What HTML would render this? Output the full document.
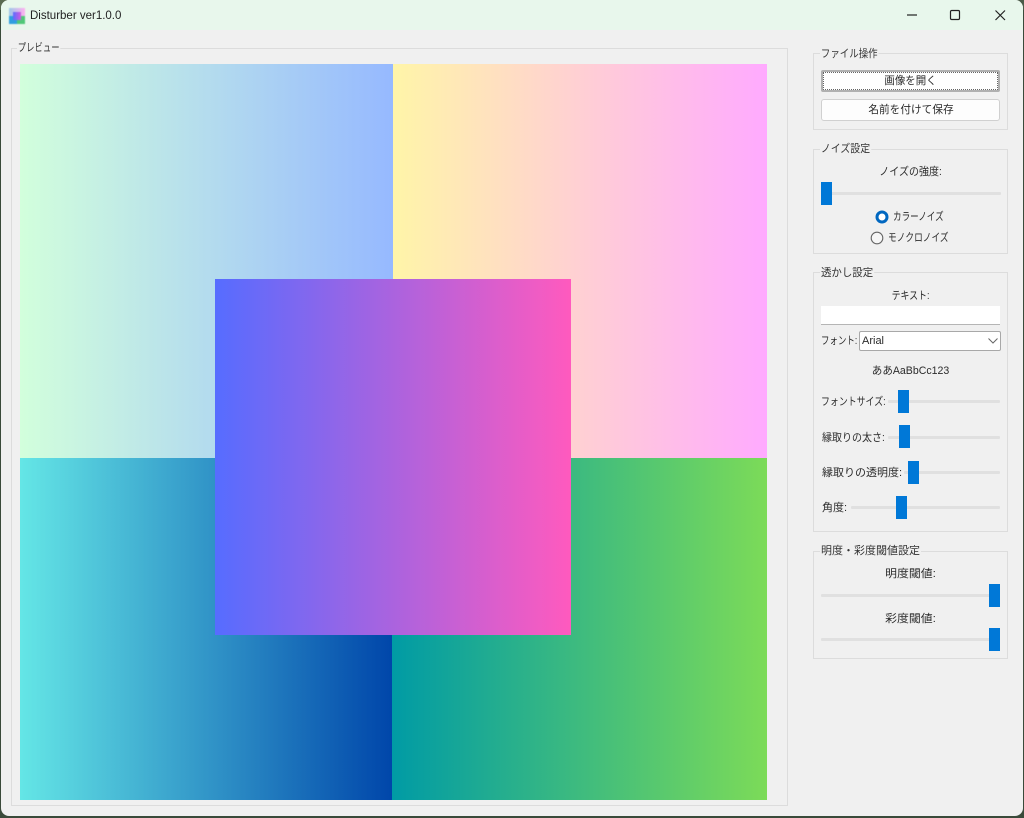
<!DOCTYPE html>
<html lang="ja">
<head>
<meta charset="utf-8">
<title>Disturber ver1.0.0</title>
<style>
html,body{margin:0;padding:0;width:1024px;height:818px;overflow:hidden;background:#3a4a3a;}
*{box-sizing:border-box;}
body{font-family:"Liberation Sans","Noto Sans CJK JP",sans-serif;font-size:11px;color:#2b2b2b;position:relative;}
.a{position:absolute;}
#bgtop{left:0;top:0;width:1024px;height:10px;background:linear-gradient(90deg,#5a6a50,#8a9a70 30%,#55634c 60%,#4a5a48);}
#win{left:1px;top:0;width:1022px;height:816px;background:#f0f0f0;border-radius:8px;overflow:hidden;}
.t{position:absolute;white-space:nowrap;line-height:14px;transform-origin:left center;}
.c{text-align:center;transform-origin:center center;}
.g{position:absolute;border:1px solid #dcdcdc;}
.leg{position:absolute;background:#f0f0f0;padding:0 1px 0 1px;white-space:nowrap;line-height:14px;height:14px;color:#333;transform-origin:left center;}
.tr{position:absolute;height:3px;background:#e0e0e0;border-radius:1px;}
.th{position:absolute;width:11px;height:23px;background:#0078d7;}
.btn{position:absolute;background:#fdfdfd;border:1px solid #d0d0d0;border-radius:3px;text-align:center;}
.s{display:inline-block;}
</style>
</head>
<body>
<div id="bgtop" class="a"></div>
<div id="win" class="a"></div>
<div class="a" style="left:1px;top:0;width:1022px;height:30px;background:#e8f7ec;border-radius:8px 8px 0 0;"></div>

<!-- app icon -->
<div class="a" style="left:9px;top:8px;width:16px;height:16px;filter:blur(.5px);">
<div class="a" style="left:0;top:0;width:16px;height:8px;background:linear-gradient(90deg,#9fc8e8,#ffb0f0);"></div>
<div class="a" style="left:0;top:8px;width:8px;height:8px;background:#2f9fe0;"></div>
<div class="a" style="left:8px;top:8px;width:8px;height:8px;background:#50c878;"></div>
<div class="a" style="left:4px;top:4px;width:8px;height:8px;background:linear-gradient(90deg,#5a6eff,#d05ae0);"></div>
</div>

<div class="t" style="left:30px;top:9px;font-size:11.5px;color:#222;">Disturber ver1.0.0</div>

<!-- window controls -->
<svg class="a" style="left:900px;top:5px;" width="116" height="20" viewBox="0 0 116 20">
<path d="M7 10H17" stroke="#222" stroke-width="1.2" fill="none"/>
<rect x="50.5" y="5.5" width="9" height="9" rx="1.2" stroke="#222" stroke-width="1.2" fill="none"/>
<path d="M95.5 5.5L105 15M105 5.5L95.5 15" stroke="#222" stroke-width="1.2" fill="none"/>
</svg>

<!-- preview -->
<div class="g" style="left:11px;top:48px;width:777px;height:758px;"></div>
<div class="leg" style="left:17px;top:41px;transform:scaleX(.76);">プレビュー</div>
<div class="a" style="left:20px;top:64px;width:373px;height:394px;background:linear-gradient(90deg,#d2ffdc,#96b9ff);"></div>
<div class="a" style="left:393px;top:64px;width:374px;height:394px;background:linear-gradient(90deg,#fff5a8,#ffaaff);"></div>
<div class="a" style="left:20px;top:458px;width:372px;height:342px;background:linear-gradient(90deg,#64e6e6,#0046aa);"></div>
<div class="a" style="left:392px;top:458px;width:375px;height:342px;background:linear-gradient(90deg,#009ba5,#7cdb58);"></div>
<div class="a" style="left:215px;top:279px;width:356px;height:356px;background:linear-gradient(90deg,#566cff,#ff5abe);"></div>

<!-- file ops -->
<div class="g" style="left:813px;top:53px;width:195px;height:77px;"></div>
<div class="leg" style="left:820px;top:47px;transform:scaleX(.86);">ファイル操作</div>
<div class="btn" style="left:821px;top:70px;width:179px;height:22px;border:2px solid #b0b0b0;border-radius:2px;background:#fff;">
<span style="display:block;position:absolute;left:0;top:0;right:0;bottom:0;border:1px dotted #666;line-height:16px;"><span class="s" style="transform:scaleX(.95);">画像を開く</span></span></div>
<div class="btn" style="left:821px;top:99px;width:179px;height:22px;line-height:20px;"><span class="s" style="transform:scaleX(.97);">名前を付けて保存</span></div>

<!-- noise -->
<div class="g" style="left:813px;top:149px;width:195px;height:105px;"></div>
<div class="leg" style="left:820px;top:142px;transform:scaleX(.9);">ノイズ設定</div>
<div class="t c" style="left:813px;top:165px;width:195px;transform:scaleX(.91);">ノイズの強度:</div>
<div class="tr" style="left:821px;top:192px;width:180px;"></div>
<div class="th" style="left:821px;top:182px;"></div>
<svg class="a" style="left:874px;top:209px;" width="16" height="16" viewBox="0 0 16 16">
<circle cx="8" cy="8" r="6.5" fill="#fff"/><circle cx="8" cy="8" r="5" fill="none" stroke="#0067c0" stroke-width="3"/><circle cx="8" cy="8" r="2.4" fill="#fff"/>
</svg>
<div class="t" style="left:893px;top:210px;transform:scaleX(.78);">カラーノイズ</div>
<svg class="a" style="left:869px;top:230px;" width="16" height="16" viewBox="0 0 16 16">
<circle cx="8" cy="8" r="5.8" fill="#f6f6f6" stroke="#666" stroke-width="1.1"/>
</svg>
<div class="t" style="left:888px;top:231px;transform:scaleX(.79);">モノクロノイズ</div>

<!-- watermark -->
<div class="g" style="left:813px;top:272px;width:195px;height:260px;"></div>
<div class="leg" style="left:820px;top:266px;transform:scaleX(.95);">透かし設定</div>
<div class="t c" style="left:813px;top:289px;width:195px;transform:scaleX(.81);">テキスト:</div>
<div class="a" style="left:821px;top:306px;width:179px;height:19px;background:#fff;border-bottom:1px solid #b5b5b5;"></div>
<div class="t" style="left:821px;top:334px;transform:scaleX(.77);">フォント:</div>
<div class="a" style="left:859px;top:331px;width:142px;height:20px;background:#fff;border:1px solid #a8a8a8;border-radius:2px;"></div>
<div class="t" style="left:862px;top:334px;">Arial</div>
<svg class="a" style="left:987px;top:337px;" width="12" height="8" viewBox="0 0 12 8"><path d="M1.5 1.5L6 6L10.5 1.5" fill="none" stroke="#666" stroke-width="1"/></svg>
<div class="t c" style="left:813px;top:364px;width:195px;transform:scaleX(.96);">ああAaBbCc123</div>

<div class="t" style="left:821px;top:395px;transform:scaleX(.81);">フォントサイズ:</div>
<div class="tr" style="left:888px;top:400px;width:112px;"></div>
<div class="th" style="left:898px;top:390px;"></div>

<div class="t" style="left:822px;top:431px;transform:scaleX(.91);">縁取りの太さ:</div>
<div class="tr" style="left:888px;top:436px;width:112px;"></div>
<div class="th" style="left:899px;top:425px;"></div>

<div class="t" style="left:822px;top:466px;">縁取りの透明度:</div>
<div class="tr" style="left:904px;top:471px;width:96px;"></div>
<div class="th" style="left:908px;top:461px;"></div>

<div class="t" style="left:822px;top:501px;">角度:</div>
<div class="tr" style="left:851px;top:506px;width:149px;"></div>
<div class="th" style="left:896px;top:496px;"></div>

<!-- threshold -->
<div class="g" style="left:813px;top:551px;width:195px;height:108px;"></div>
<div class="leg" style="left:820px;top:544px;">明度・彩度閾値設定</div>
<div class="t c" style="left:813px;top:567px;width:195px;transform:scaleX(1.08);">明度閾値:</div>
<div class="tr" style="left:821px;top:594px;width:170px;"></div>
<div class="th" style="left:989px;top:584px;"></div>
<div class="t c" style="left:813px;top:612px;width:195px;transform:scaleX(1.08);">彩度閾値:</div>
<div class="tr" style="left:821px;top:638px;width:170px;"></div>
<div class="th" style="left:989px;top:628px;"></div>
</body>
</html>
